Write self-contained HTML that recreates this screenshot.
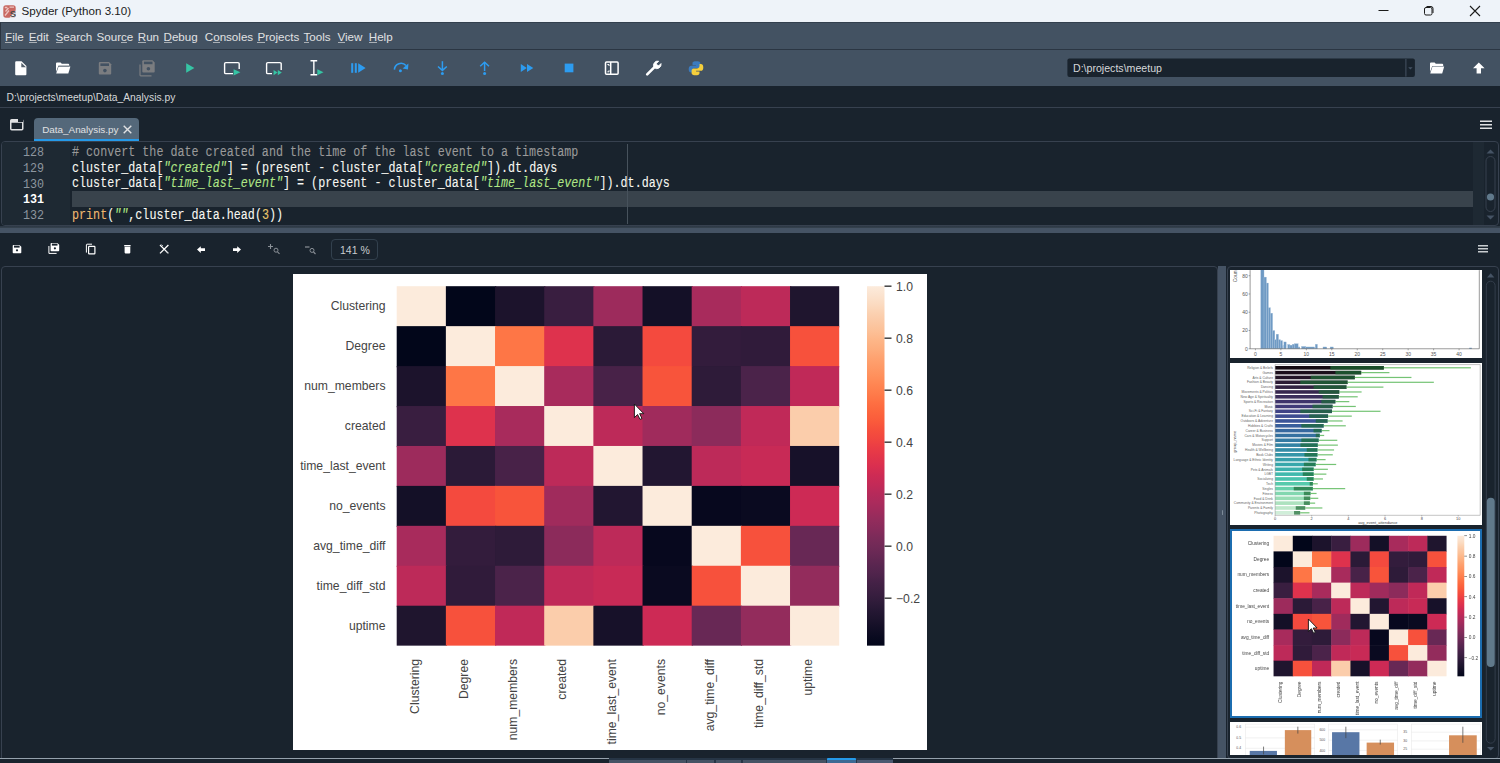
<!DOCTYPE html>
<html><head><meta charset="utf-8">
<style>
*{margin:0;padding:0;box-sizing:border-box}
html,body{width:1500px;height:763px;overflow:hidden;background:#19232d;font-family:"Liberation Sans",sans-serif;-webkit-font-smoothing:antialiased}
.a{position:absolute}
#title{left:0;top:0;width:1500px;height:22px;background:#eef3f9}
#title .t{left:21.5px;top:4px;font-size:11.6px;color:#1b1b1b;white-space:nowrap}
#menu{left:0;top:22px;width:1500px;height:28px;background:#435262;border-left:1px solid #2a3440;border-bottom:1px solid #2b3643;border-top:1px solid #33404e}
.mi{position:absolute;top:7px;font-size:11.6px;color:#e0e1e3;white-space:nowrap}
.mi u{text-decoration:none;box-shadow:inset 0 -1px 0 #aab0b6;padding-bottom:0}
#tool{left:0;top:50px;width:1500px;height:36px;background:#435262}
#pathbar{left:0;top:86px;width:1500px;height:21px;background:#19232d}
.ptxt{left:6.5px;top:5.5px;font-size:10.3px;color:#d5d8da;white-space:nowrap}
#hline1{left:0;top:107px;width:1500px;height:1px;background:#37414f}
#tab{left:34px;top:118px;width:105px;height:24px;background:#54687a;border-radius:4px 4px 0 0}
#tab .tx{left:8.2px;top:5.5px;font-size:9.9px;color:#e0e1e3;white-space:nowrap}
#tab .ul{left:0;top:21px;width:105px;height:3px;background:#259ae9}
#editor{left:1px;top:141px;width:1498px;height:85px;border:1px solid #37414f;border-radius:4px;background:#19232d;overflow:hidden}
#gutter{left:0;top:0;width:68px;height:84px;background:#1e2933}
.ln{position:absolute;left:19px;font-family:"Liberation Mono",monospace;font-size:11.7px;color:#8d969f;width:23px;text-align:right;line-height:15.7px;transform:scaleY(1.17);transform-origin:0 11px;margin-top:2.2px}
.code{position:absolute;left:70px;font-family:"Liberation Mono",monospace;font-size:11.72px;color:#f8f8f2;white-space:pre;line-height:15.7px;transform:scaleY(1.17);transform-origin:0 11px;margin-top:2px;-webkit-text-stroke:0.08px currentColor}
.cm{color:#9a9a9a}.st{color:#b0e686;font-style:italic}.bi{color:#efb870}.nu{color:#e8c56b}
#curline{left:70px;top:49px;width:1402px;height:16px;background:#39434c}
#edgeline{left:625px;top:2px;width:1px;height:80px;background:#47525c}
#splitter1{left:0;top:225.5px;width:1500px;height:7.5px;background:linear-gradient(#2a3644 0,#37434f 2px,#455364 2.5px,#455364 100%)}
#ptool{left:0;top:233px;width:1500px;height:33px;background:#19232d}
#zoombox{left:331px;top:239px;width:47px;height:21px;border:1px solid #32404d;border-radius:4px}
#zoombox span{position:absolute;left:8px;top:4px;font-size:10.5px;color:#c9cdd0;white-space:nowrap}
#plotframe{left:1px;top:266px;width:1217px;height:500px;border:1px solid #37414f;border-radius:4px}
#vsplit{left:1218px;top:266px;width:8px;height:497px;background:#455364}
#thumbframe{left:1227px;top:266px;width:272px;height:493px;border:1px solid #37414f;border-radius:4px}
#fig{left:293px;top:274.1px;width:633.5px;height:475.6px;background:#fff}
.yl{position:absolute;left:-27.5px;font-size:12.2px;color:#444;white-space:nowrap;text-align:right;width:120px;line-height:16px}
.xl{position:absolute;top:385px;font-size:12.2px;color:#444;white-space:nowrap;line-height:16px;transform-origin:0 0;transform:rotate(-90deg) translate(-100%,-50%)}
.tl{position:absolute;left:603px;font-size:12.2px;color:#444;line-height:16px;white-space:nowrap}
#bottombar{left:0;top:758px;width:1500px;height:5px;background:#19232d}
</style></head><body>
<div id="title" class="a">
 <svg class="a" style="left:3px;top:4.5px" width="13" height="13" viewBox="0 0 13 13"><rect x="0.3" y="0.3" width="12.4" height="12.4" rx="2.6" fill="#c86862"/><path d="M1.8 2.5h2.5M6.5 2.2h4.5M2.5 6.5l3-3.5M2 10.5l4-5" stroke="#ecc4c0" stroke-width="1.3"/><path d="M6.4 12.7L12.7 5.2V10.1a2.6 2.6 0 0 1-2.6 2.6Z" fill="#eef3f9"/><text x="9.9" y="12.4" font-size="9.5" font-family="Liberation Sans" fill="#4a4a4a" text-anchor="middle" font-weight="bold">S</text></svg>
 <div class="a t">Spyder (Python 3.10)</div>
 <svg class="a" style="left:1378px;top:5px" width="12" height="12"><rect x="0.5" y="5" width="10" height="1" fill="#1b1b1b"/></svg>
 <svg class="a" style="left:1423px;top:5px" width="12" height="12"><rect x="1.5" y="2.5" width="7.5" height="7.5" rx="1.5" fill="none" stroke="#1b1b1b" stroke-width="1"/><path d="M3.5 1.5h4.5a2 2 0 0 1 2 2v4.5" fill="none" stroke="#1b1b1b" stroke-width="1"/></svg>
 <svg class="a" style="left:1469px;top:5px" width="12" height="12"><path d="M1 1L11 11M11 1L1 11" stroke="#1b1b1b" stroke-width="1.1"/></svg>
</div>
<div id="menu" class="a">
 <div class="mi" style="left:4.1px"><u>F</u>ile</div>
 <div class="mi" style="left:27.8px"><u>E</u>dit</div>
 <div class="mi" style="left:54.5px"><u>S</u>earch</div>
 <div class="mi" style="left:95.5px">Sour<u>c</u>e</div>
 <div class="mi" style="left:136.8px"><u>R</u>un</div>
 <div class="mi" style="left:162.5px"><u>D</u>ebug</div>
 <div class="mi" style="left:203.8px">C<u>o</u>nsoles</div>
 <div class="mi" style="left:256.4px"><u>P</u>rojects</div>
 <div class="mi" style="left:302.5px"><u>T</u>ools</div>
 <div class="mi" style="left:336.5px"><u>V</u>iew</div>
 <div class="mi" style="left:367.8px"><u>H</u>elp</div>
</div>
<div id="tool" class="a">
<svg class="a" style="left:0;top:0" width="1500" height="36" viewBox="0 50 1500 36">
<!-- new file -->
<path d="M15.2 62.2a1 1 0 0 1 1-1H21.5L26.4 66.1V74.2a1 1 0 0 1-1 1H16.2a1 1 0 0 1-1-1Z" fill="#ffffff"/>
<path d="M21.3 62.8L26 67.2H21.3Z" fill="#55606b"/>
<!-- open folder -->
<path d="M56 63.4a1 1 0 0 1 1-1h3.6l1.2 1.3h6.4a1 1 0 0 1 1 1V66H58.3L56 72Z" fill="#ffffff"/>
<path d="M58.6 66.6H70.4L68.3 73.6H56.2Z" fill="#ffffff"/>
<path d="M58.3 66H69.2" stroke="#55606b" stroke-width="0.8"/>
<!-- save disabled -->
<path d="M98.8 63a1 1 0 0 1 1-1h9.2l2.2 2.2v9.2a1 1 0 0 1-1 1H99.8a1 1 0 0 1-1-1Z" fill="#7b7d80"/>
<rect x="100.4" y="63.4" width="8.6" height="2.6" fill="#435262"/>
<circle cx="104.9" cy="70.6" r="1.8" fill="#435262"/>
<!-- save all disabled -->
<path d="M142.3 61.2a1 1 0 0 1 1-1h9.2l2.2 2.2v9.2a1 1 0 0 1-1 1H143.3a1 1 0 0 1-1-1Z" fill="#7b7d80"/>
<rect x="143.9" y="61.6" width="8.6" height="2.6" fill="#435262"/>
<circle cx="148.4" cy="68.8" r="1.8" fill="#435262"/>
<path d="M140 64.5V75a0.8 0.8 0 0 0 0.8 0.8H151.5" fill="none" stroke="#7b7d80" stroke-width="1.2"/>
<!-- run -->
<path d="M186.2 63.3L194.4 68L186.2 72.7Z" fill="#36c4a4"/>
<!-- run cell -->
<path d="M233 73.6H225.8a1.2 1.2 0 0 1-1.2-1.2V63.8a1.2 1.2 0 0 1 1.2-1.2H238a1.2 1.2 0 0 1 1.2 1.2V69" fill="none" stroke="#ffffff" stroke-width="1.4"/>
<path d="M233.6 69.3L240.4 72.3L233.6 75.5Z" fill="#36c4a4"/>
<!-- run cell advance -->
<path d="M272 73.6H267.8a1.2 1.2 0 0 1-1.2-1.2V63.8a1.2 1.2 0 0 1 1.2-1.2H280a1.2 1.2 0 0 1 1.2 1.2V70" fill="none" stroke="#ffffff" stroke-width="1.4"/>
<path d="M273.6 70L277.6 72.6L273.6 75.2Z M277.8 70L281.8 72.6L277.8 75.2Z" fill="#36c4a4"/>
<!-- run selection -->
<path d="M310.5 60.7H317.2M310.5 74.8H317.2M313.85 60.7V74.8" stroke="#ffffff" stroke-width="1.4"/>
<path d="M317.3 69.2L323.5 72.2L317.3 75.3Z" fill="#36c4a4"/>
<!-- debug -->
<rect x="351.2" y="63.2" width="2" height="9.6" fill="#2d9cf0"/>
<rect x="354.8" y="63.2" width="2" height="9.6" fill="#2d9cf0"/>
<path d="M358.2 63.2L365.6 68L358.2 72.8Z" fill="#2d9cf0"/>
<!-- step over -->
<path d="M394.4 69.6A6.6 6.6 0 0 1 406 65.6" fill="none" stroke="#2d9cf0" stroke-width="1.6"/>
<path d="M408.4 63.5L408 69.5L402.6 68.6Z" fill="#2d9cf0"/>
<circle cx="400.4" cy="70.8" r="1.5" fill="#2d9cf0"/>
<!-- step into -->
<path d="M442.4 61.2V70" stroke="#2d9cf0" stroke-width="1.5"/>
<path d="M438 66.5L442.4 70.4L446.8 66.5" fill="none" stroke="#2d9cf0" stroke-width="1.5"/>
<circle cx="442.4" cy="73.6" r="1.5" fill="#2d9cf0"/>
<!-- step return -->
<path d="M484.6 62V71" stroke="#2d9cf0" stroke-width="1.5"/>
<path d="M480.2 66.2L484.6 62.2L489 66.2" fill="none" stroke="#2d9cf0" stroke-width="1.5"/>
<circle cx="484.6" cy="73.6" r="1.5" fill="#2d9cf0"/>
<!-- continue -->
<path d="M520.8 64L526.8 68L520.8 72Z M527 64L533.3 68L527 72Z" fill="#2d9cf0"/>
<!-- stop -->
<rect x="564.7" y="63.6" width="8.7" height="8.7" fill="#2d9cf0"/>
<!-- maximize pane -->
<rect x="605.5" y="62" width="12.6" height="12.2" rx="1" fill="none" stroke="#ffffff" stroke-width="1.5"/>
<path d="M610.7 62V74.2" stroke="#ffffff" stroke-width="1.5"/>
<path d="M607.4 64.5H609V66M607.4 71.8H609V70.3" fill="none" stroke="#ffffff" stroke-width="1"/>
<!-- wrench -->
<path d="M647.2 74.4L655 66.6" stroke="#ffffff" stroke-width="2.6" stroke-linecap="round"/>
<path d="M654.2 67.6A4.2 4.2 0 0 1 658.6 61.2L656.4 63.4L657 65.2L658.8 65.8L661 63.6A4.2 4.2 0 0 1 654.2 67.6Z" fill="#ffffff" stroke="#ffffff" stroke-width="1"/>
<!-- python -->
<path d="M695.8 61.3c-3 0-3.3 1.3-3.3 2.2v1.7h3.4v0.6h-4.8c-1.5 0-2.4 1.2-2.4 3.4s1 3.3 2.4 3.3h1.4v-2c0-1.4 1.2-2.4 2.5-2.4h3.3c1.2 0 2.1-1 2.1-2.2v-2.4c0-1.3-1.2-2.2-2.6-2.2Z" fill="#3b7bbf"/>
<path d="M696.2 75.3c3 0 3.3-1.3 3.3-2.2v-1.7h-3.4v-0.6h4.8c1.5 0 2.4-1.2 2.4-3.4s-1-3.3-2.4-3.3h-1.4v2c0 1.4-1.2 2.4-2.5 2.4h-3.3c-1.2 0-2.1 1-2.1 2.2v2.4c0 1.3 1.2 2.2 2.6 2.2Z" fill="#f5cf3c"/>
<!-- combo -->
<rect x="1067.4" y="58.6" width="347.5" height="18.4" rx="2" fill="#19232d"/>
<path d="M1405.9 59V76.6" stroke="#455364" stroke-width="1"/>
<path d="M1408.2 67.3L1410.4 69.5L1412.6 67.3Z" fill="#455364"/>
<!-- folder right -->
<path d="M1430 63.5a1 1 0 0 1 1-1h3.6l1.2 1.2h6.4a1 1 0 0 1 1 1V66H1432.3L1430 72Z" fill="#ffffff"/>
<path d="M1432.5 66.6H1444.2L1442.2 73.6H1430.2Z" fill="#ffffff"/>
<!-- up arrow -->
<path d="M1478.8 62.5L1484.6 68.3H1481V73.6H1476.6V68.3H1473Z" fill="#ffffff"/>
</svg>
<div class="a" style="left:1073px;top:12px;font-size:10.6px;color:#d5d8da;white-space:nowrap">D:\projects\meetup</div>
</div>
<div id="pathbar" class="a"><div class="a ptxt">D:\projects\meetup\Data_Analysis.py</div></div>
<div id="hline1" class="a"></div>
<svg class="a" style="left:10px;top:119px" width="14" height="12"><rect x="0.75" y="0.75" width="12" height="10" rx="1" fill="none" stroke="#e0e1e3" stroke-width="1.5"/><rect x="0.75" y="0.75" width="12" height="3" fill="#e0e1e3"/><rect x="8" y="0" width="5" height="3" fill="#19232d"/></svg>
<div id="tab" class="a"><div class="a tx">Data_Analysis.py</div>
 <svg class="a" style="left:89px;top:7px" width="9" height="9"><path d="M0.7 0.7L8.3 8.3M8.3 0.7L0.7 8.3" stroke="#e0e1e3" stroke-width="1.4"/></svg>
 <div class="a ul"></div></div>
<svg class="a" style="left:1480px;top:120px" width="12" height="10"><rect x="0" y="0.5" width="12" height="1.5" fill="#e0e1e3"/><rect x="0" y="4" width="12" height="1.5" fill="#e0e1e3"/><rect x="0" y="7.5" width="12" height="1.5" fill="#e0e1e3"/></svg>
<div id="editor" class="a">
 <div id="gutter" class="a"></div>
 <div id="curline" class="a"></div>
 <div id="edgeline" class="a"></div>
 <div class="ln" style="top:2px">128</div>
 <div class="ln" style="top:17.7px">129</div>
 <div class="ln" style="top:33.4px">130</div>
 <div class="ln" style="top:49.1px;color:#fff;font-weight:bold">131</div>
 <div class="ln" style="top:64.8px">132</div>
 <div class="code" style="top:2px"><span class="cm"># convert the date created and the time of the last event to a timestamp</span></div>
 <div class="code" style="top:17.7px">cluster_data[<span class="st">"created"</span>] = (present - cluster_data[<span class="st">"created"</span>]).dt.days</div>
 <div class="code" style="top:33.4px">cluster_data[<span class="st">"time_last_event"</span>] = (present - cluster_data[<span class="st">"time_last_event"</span>]).dt.days</div>
 <div class="code" style="top:64.8px"><span class="bi">print</span>(<span class="st">""</span>,cluster_data.head(<span class="nu">3</span>))</div>
 <div class="a" style="left:1471px;top:0;width:11px;height:84px;background:#1e2933"></div>
</div>
<svg class="a" style="left:1484px;top:147px" width="13" height="75">
 <path d="M2.5 6.5L6.5 2.5L10.5 6.5Z" fill="#455364"/>
 <rect x="2" y="9.5" width="9" height="55" rx="4.5" fill="none" stroke="#37414f" stroke-width="1"/>
 <circle cx="6.5" cy="50" r="3.6" fill="#60798b"/>
 <path d="M2.5 68.5L6.5 72.5L10.5 68.5Z" fill="#455364"/>
</svg>
<div id="splitter1" class="a"></div>
<div id="ptool" class="a">
<svg class="a" style="left:0;top:0" width="1500" height="33" viewBox="0 233 1500 33">
<!-- save -->
<path d="M12.7 245.8a0.8 0.8 0 0 1 0.8-0.8h6l1.8 1.8v5.7a0.8 0.8 0 0 1-0.8 0.8H13.5a0.8 0.8 0 0 1-0.8-0.8Z" fill="#ffffff"/>
<rect x="14" y="245.6" width="5.6" height="2" fill="#19232d"/>
<circle cx="17" cy="250.3" r="1.1" fill="#19232d"/>
<!-- save all -->
<path d="M50.6 243.8a0.8 0.8 0 0 1 0.8-0.8h6l1.8 1.8v5.7a0.8 0.8 0 0 1-0.8 0.8H51.4a0.8 0.8 0 0 1-0.8-0.8Z" fill="#ffffff"/>
<rect x="51.9" y="243.6" width="5.6" height="2" fill="#19232d"/>
<circle cx="54.9" cy="248.3" r="1.1" fill="#19232d"/>
<path d="M48.9 246V253.4H56.6" fill="none" stroke="#ffffff" stroke-width="1"/>
<!-- copy -->
<path d="M86.4 252.6V244.8a0.6 0.6 0 0 1 0.6-0.6H92" fill="none" stroke="#ffffff" stroke-width="1"/>
<rect x="88.6" y="246.3" width="6.3" height="7.6" rx="0.6" fill="none" stroke="#ffffff" stroke-width="1.2"/>
<!-- delete -->
<rect x="124.2" y="245" width="6.4" height="1.3" fill="#ffffff"/>
<path d="M124.6 246.8H130.3V252.6a0.8 0.8 0 0 1-0.8 0.8H125.4a0.8 0.8 0 0 1-0.8-0.8Z" fill="#ffffff"/>
<!-- close all -->
<path d="M160 245L168.4 253.4M168.4 245L160 253.4" stroke="#ffffff" stroke-width="1.3"/>
<path d="M161.5 244.5L163 246M166 251.5L167.5 253" stroke="#b0b6bb" stroke-width="1"/>
<!-- back -->
<path d="M197 249.6L200.8 246.2V248.3H205V251H200.8V253Z" fill="#ffffff"/>
<!-- forward -->
<path d="M241 249.6L237.2 246.2V248.3H233V251H237.2V253Z" fill="#ffffff"/>
<!-- zoom in disabled -->
<path d="M270.5 244V249M268 246.5H273" stroke="#8a9097" stroke-width="1.1"/>
<circle cx="276" cy="250.2" r="2" fill="none" stroke="#8a9097" stroke-width="1"/>
<path d="M277.5 251.8L279.5 253.8" stroke="#8a9097" stroke-width="1.1"/>
<!-- zoom out disabled -->
<path d="M305 247H309.5" stroke="#8a9097" stroke-width="1.2"/>
<circle cx="312" cy="250.4" r="2" fill="none" stroke="#8a9097" stroke-width="1"/>
<path d="M313.5 252L315.5 254" stroke="#8a9097" stroke-width="1.1"/>
</svg>
</div>
<div id="zoombox" class="a"><span>141 %</span></div>
<svg class="a" style="left:1478px;top:245px" width="10" height="8"><rect x="0" y="0" width="10" height="1.5" fill="#c9cdd0"/><rect x="0" y="3" width="10" height="1.5" fill="#c9cdd0"/><rect x="0" y="6" width="10" height="1.5" fill="#c9cdd0"/></svg>
<div id="plotframe" class="a"></div>
<div id="vsplit" class="a"></div>
<div id="thumbframe" class="a"></div>
<div id="fig" class="a fig"><svg class="a" style="left:0;top:0" width="634" height="476"><defs><linearGradient id="cbgm" x1="0" y1="1" x2="0" y2="0">
<stop offset="0.000" stop-color="#02061a"/>
<stop offset="0.025" stop-color="#0a0a20"/>
<stop offset="0.050" stop-color="#130f26"/>
<stop offset="0.075" stop-color="#1d142d"/>
<stop offset="0.100" stop-color="#261834"/>
<stop offset="0.125" stop-color="#311c3b"/>
<stop offset="0.150" stop-color="#3b1f41"/>
<stop offset="0.175" stop-color="#442146"/>
<stop offset="0.200" stop-color="#50244c"/>
<stop offset="0.225" stop-color="#5a2650"/>
<stop offset="0.250" stop-color="#662854"/>
<stop offset="0.275" stop-color="#712a57"/>
<stop offset="0.300" stop-color="#7b2b59"/>
<stop offset="0.325" stop-color="#882b5b"/>
<stop offset="0.350" stop-color="#932c5c"/>
<stop offset="0.375" stop-color="#a02b5c"/>
<stop offset="0.400" stop-color="#ac2b5c"/>
<stop offset="0.425" stop-color="#b72a5a"/>
<stop offset="0.450" stop-color="#c42a57"/>
<stop offset="0.475" stop-color="#ce2b54"/>
<stop offset="0.500" stop-color="#da2f4f"/>
<stop offset="0.525" stop-color="#e2354a"/>
<stop offset="0.550" stop-color="#ea3c45"/>
<stop offset="0.575" stop-color="#f14640"/>
<stop offset="0.600" stop-color="#f64f3c"/>
<stop offset="0.625" stop-color="#fa5b3b"/>
<stop offset="0.650" stop-color="#fc653d"/>
<stop offset="0.675" stop-color="#fe6f42"/>
<stop offset="0.700" stop-color="#fe7b4a"/>
<stop offset="0.725" stop-color="#ff8552"/>
<stop offset="0.750" stop-color="#ff905c"/>
<stop offset="0.775" stop-color="#fe9966"/>
<stop offset="0.800" stop-color="#fea270"/>
<stop offset="0.825" stop-color="#fdad7d"/>
<stop offset="0.850" stop-color="#fdb688"/>
<stop offset="0.875" stop-color="#fcc097"/>
<stop offset="0.900" stop-color="#fbc8a4"/>
<stop offset="0.925" stop-color="#fbd1b1"/>
<stop offset="0.950" stop-color="#fbdbc1"/>
<stop offset="0.975" stop-color="#fbe3cf"/>
<stop offset="1.000" stop-color="#fcebdc"/>
</linearGradient></defs>
<rect x="103.70" y="12.20" width="50.37" height="41.14" fill="#fcebdc"/>
<rect x="152.87" y="12.20" width="50.37" height="41.14" fill="#02061a"/>
<rect x="202.03" y="12.20" width="50.37" height="41.14" fill="#1c132c"/>
<rect x="251.20" y="12.20" width="50.37" height="41.14" fill="#391e40"/>
<rect x="300.37" y="12.20" width="50.37" height="41.14" fill="#9d2b5c"/>
<rect x="349.53" y="12.20" width="50.37" height="41.14" fill="#141027"/>
<rect x="398.70" y="12.20" width="50.37" height="41.14" fill="#a82b5c"/>
<rect x="447.87" y="12.20" width="50.37" height="41.14" fill="#bd2a59"/>
<rect x="497.03" y="12.20" width="49.17" height="41.14" fill="#1f152e"/>
<rect x="103.70" y="52.14" width="50.37" height="41.14" fill="#02061a"/>
<rect x="152.87" y="52.14" width="50.37" height="41.14" fill="#fcebdc"/>
<rect x="202.03" y="52.14" width="50.37" height="41.14" fill="#fe7646"/>
<rect x="251.20" y="52.14" width="50.37" height="41.14" fill="#de324d"/>
<rect x="300.37" y="52.14" width="50.37" height="41.14" fill="#2b1a37"/>
<rect x="349.53" y="52.14" width="50.37" height="41.14" fill="#f44a3e"/>
<rect x="398.70" y="52.14" width="50.37" height="41.14" fill="#331c3c"/>
<rect x="447.87" y="52.14" width="50.37" height="41.14" fill="#301b3a"/>
<rect x="497.03" y="52.14" width="49.17" height="41.14" fill="#f7513c"/>
<rect x="103.70" y="92.08" width="50.37" height="41.14" fill="#1c132c"/>
<rect x="152.87" y="92.08" width="50.37" height="41.14" fill="#fe7646"/>
<rect x="202.03" y="92.08" width="50.37" height="41.14" fill="#fcebdc"/>
<rect x="251.20" y="92.08" width="50.37" height="41.14" fill="#a82b5c"/>
<rect x="300.37" y="92.08" width="50.37" height="41.14" fill="#482248"/>
<rect x="349.53" y="92.08" width="50.37" height="41.14" fill="#f8543b"/>
<rect x="398.70" y="92.08" width="50.37" height="41.14" fill="#2e1b39"/>
<rect x="447.87" y="92.08" width="50.37" height="41.14" fill="#4b234a"/>
<rect x="497.03" y="92.08" width="49.17" height="41.14" fill="#c02958"/>
<rect x="103.70" y="132.02" width="50.37" height="41.14" fill="#391e40"/>
<rect x="152.87" y="132.02" width="50.37" height="41.14" fill="#de324d"/>
<rect x="202.03" y="132.02" width="50.37" height="41.14" fill="#a82b5c"/>
<rect x="251.20" y="132.02" width="50.37" height="41.14" fill="#fcebdc"/>
<rect x="300.37" y="132.02" width="50.37" height="41.14" fill="#bd2a59"/>
<rect x="349.53" y="132.02" width="50.37" height="41.14" fill="#a02b5c"/>
<rect x="398.70" y="132.02" width="50.37" height="41.14" fill="#8c2b5b"/>
<rect x="447.87" y="132.02" width="50.37" height="41.14" fill="#c02958"/>
<rect x="497.03" y="132.02" width="49.17" height="41.14" fill="#fbcdab"/>
<rect x="103.70" y="171.96" width="50.37" height="41.14" fill="#9d2b5c"/>
<rect x="152.87" y="171.96" width="50.37" height="41.14" fill="#2b1a37"/>
<rect x="202.03" y="171.96" width="50.37" height="41.14" fill="#482248"/>
<rect x="251.20" y="171.96" width="50.37" height="41.14" fill="#bd2a59"/>
<rect x="300.37" y="171.96" width="50.37" height="41.14" fill="#fcebdc"/>
<rect x="349.53" y="171.96" width="50.37" height="41.14" fill="#221631"/>
<rect x="398.70" y="171.96" width="50.37" height="41.14" fill="#bd2a59"/>
<rect x="447.87" y="171.96" width="50.37" height="41.14" fill="#c82a56"/>
<rect x="497.03" y="171.96" width="49.17" height="41.14" fill="#171129"/>
<rect x="103.70" y="211.89" width="50.37" height="41.14" fill="#141027"/>
<rect x="152.87" y="211.89" width="50.37" height="41.14" fill="#f44a3e"/>
<rect x="202.03" y="211.89" width="50.37" height="41.14" fill="#f8543b"/>
<rect x="251.20" y="211.89" width="50.37" height="41.14" fill="#a02b5c"/>
<rect x="300.37" y="211.89" width="50.37" height="41.14" fill="#221631"/>
<rect x="349.53" y="211.89" width="50.37" height="41.14" fill="#fcebdc"/>
<rect x="398.70" y="211.89" width="50.37" height="41.14" fill="#07081e"/>
<rect x="447.87" y="211.89" width="50.37" height="41.14" fill="#0a0a20"/>
<rect x="497.03" y="211.89" width="49.17" height="41.14" fill="#cd2a55"/>
<rect x="103.70" y="251.83" width="50.37" height="41.14" fill="#a82b5c"/>
<rect x="152.87" y="251.83" width="50.37" height="41.14" fill="#331c3c"/>
<rect x="202.03" y="251.83" width="50.37" height="41.14" fill="#2e1b39"/>
<rect x="251.20" y="251.83" width="50.37" height="41.14" fill="#8c2b5b"/>
<rect x="300.37" y="251.83" width="50.37" height="41.14" fill="#bd2a59"/>
<rect x="349.53" y="251.83" width="50.37" height="41.14" fill="#07081e"/>
<rect x="398.70" y="251.83" width="50.37" height="41.14" fill="#fcebdc"/>
<rect x="447.87" y="251.83" width="50.37" height="41.14" fill="#f7513c"/>
<rect x="497.03" y="251.83" width="49.17" height="41.14" fill="#682855"/>
<rect x="103.70" y="291.77" width="50.37" height="41.14" fill="#bd2a59"/>
<rect x="152.87" y="291.77" width="50.37" height="41.14" fill="#301b3a"/>
<rect x="202.03" y="291.77" width="50.37" height="41.14" fill="#4b234a"/>
<rect x="251.20" y="291.77" width="50.37" height="41.14" fill="#c02958"/>
<rect x="300.37" y="291.77" width="50.37" height="41.14" fill="#c82a56"/>
<rect x="349.53" y="291.77" width="50.37" height="41.14" fill="#0a0a20"/>
<rect x="398.70" y="291.77" width="50.37" height="41.14" fill="#f7513c"/>
<rect x="447.87" y="291.77" width="50.37" height="41.14" fill="#fcebdc"/>
<rect x="497.03" y="291.77" width="49.17" height="41.14" fill="#932c5c"/>
<rect x="103.70" y="331.71" width="50.37" height="39.94" fill="#1f152e"/>
<rect x="152.87" y="331.71" width="50.37" height="39.94" fill="#f7513c"/>
<rect x="202.03" y="331.71" width="50.37" height="39.94" fill="#c02958"/>
<rect x="251.20" y="331.71" width="50.37" height="39.94" fill="#fbcdab"/>
<rect x="300.37" y="331.71" width="50.37" height="39.94" fill="#171129"/>
<rect x="349.53" y="331.71" width="50.37" height="39.94" fill="#cd2a55"/>
<rect x="398.70" y="331.71" width="50.37" height="39.94" fill="#682855"/>
<rect x="447.87" y="331.71" width="50.37" height="39.94" fill="#932c5c"/>
<rect x="497.03" y="331.71" width="49.17" height="39.94" fill="#fcebdc"/>
<rect x="574.00" y="12.20" width="17.5" height="359.45" fill="url(#cbgm)"/>
<rect x="591.50" y="11.45" width="7" height="1.5" fill="#444"/>
<rect x="591.50" y="63.45" width="7" height="1.5" fill="#444"/>
<rect x="591.50" y="115.45" width="7" height="1.5" fill="#444"/>
<rect x="591.50" y="167.45" width="7" height="1.5" fill="#444"/>
<rect x="591.50" y="219.45" width="7" height="1.5" fill="#444"/>
<rect x="591.50" y="271.45" width="7" height="1.5" fill="#444"/>
<rect x="591.50" y="323.45" width="7" height="1.5" fill="#444"/>
</svg>
<div class="yl" style="top:24.2px">Clustering</div>
<div class="yl" style="top:64.1px">Degree</div>
<div class="yl" style="top:104.0px">num_members</div>
<div class="yl" style="top:144.0px">created</div>
<div class="yl" style="top:183.9px">time_last_event</div>
<div class="yl" style="top:223.9px">no_events</div>
<div class="yl" style="top:263.8px">avg_time_diff</div>
<div class="yl" style="top:303.7px">time_diff_std</div>
<div class="yl" style="top:343.7px">uptime</div>
<div class="xl" style="left:121.8px">Clustering</div>
<div class="xl" style="left:170.9px">Degree</div>
<div class="xl" style="left:220.1px">num_members</div>
<div class="xl" style="left:269.3px">created</div>
<div class="xl" style="left:318.5px">time_last_event</div>
<div class="xl" style="left:367.6px">no_events</div>
<div class="xl" style="left:416.8px">avg_time_diff</div>
<div class="xl" style="left:466.0px">time_diff_std</div>
<div class="xl" style="left:515.1px">uptime</div>
<div class="tl" style="top:5.2px">1.0</div>
<div class="tl" style="top:57.2px">0.8</div>
<div class="tl" style="top:109.2px">0.6</div>
<div class="tl" style="top:161.2px">0.4</div>
<div class="tl" style="top:213.2px">0.2</div>
<div class="tl" style="top:265.2px">0.0</div>
<div class="tl" style="top:317.2px">−0.2</div></div>
<div class="a" style="left:1230.3px;top:269.8px;width:251.8px;height:88.7px;background:#fff;overflow:hidden">
<svg class="a" style="left:0;top:0" width="252" height="89" viewBox="1230.3 269.8 251.8 88.7">
<rect x="1261.00" y="260.80" width="3.30" height="87.60" fill="#6f9ac4" stroke="#a9c3dc" stroke-width="0.3"/>
<rect x="1264.30" y="276.77" width="2.40" height="71.63" fill="#6f9ac4" stroke="#a9c3dc" stroke-width="0.3"/>
<rect x="1266.70" y="282.70" width="2.00" height="65.70" fill="#6f9ac4" stroke="#a9c3dc" stroke-width="0.3"/>
<rect x="1268.70" y="307.34" width="2.00" height="41.06" fill="#6f9ac4" stroke="#a9c3dc" stroke-width="0.3"/>
<rect x="1270.70" y="312.81" width="2.20" height="35.59" fill="#6f9ac4" stroke="#a9c3dc" stroke-width="0.3"/>
<rect x="1272.90" y="330.15" width="2.20" height="18.25" fill="#6f9ac4" stroke="#a9c3dc" stroke-width="0.3"/>
<rect x="1275.10" y="339.27" width="1.30" height="9.12" fill="#6f9ac4" stroke="#a9c3dc" stroke-width="0.3"/>
<rect x="1276.40" y="333.80" width="2.40" height="14.60" fill="#6f9ac4" stroke="#a9c3dc" stroke-width="0.3"/>
<rect x="1278.80" y="339.27" width="1.80" height="9.12" fill="#6f9ac4" stroke="#a9c3dc" stroke-width="0.3"/>
<rect x="1280.60" y="340.19" width="2.20" height="8.21" fill="#6f9ac4" stroke="#a9c3dc" stroke-width="0.3"/>
<rect x="1282.80" y="344.75" width="0.80" height="3.65" fill="#6f9ac4" stroke="#a9c3dc" stroke-width="0.3"/>
<rect x="1284.10" y="341.56" width="2.40" height="6.84" fill="#6f9ac4" stroke="#a9c3dc" stroke-width="0.3"/>
<rect x="1287.90" y="344.11" width="2.30" height="4.29" fill="#6f9ac4" stroke="#a9c3dc" stroke-width="0.3"/>
<rect x="1290.20" y="344.75" width="2.20" height="3.65" fill="#6f9ac4" stroke="#a9c3dc" stroke-width="0.3"/>
<rect x="1292.40" y="343.84" width="2.20" height="4.56" fill="#6f9ac4" stroke="#a9c3dc" stroke-width="0.3"/>
<rect x="1294.60" y="343.29" width="3.80" height="5.11" fill="#6f9ac4" stroke="#a9c3dc" stroke-width="0.3"/>
<rect x="1298.40" y="346.57" width="1.70" height="1.82" fill="#6f9ac4" stroke="#a9c3dc" stroke-width="0.3"/>
<rect x="1301.70" y="346.03" width="4.40" height="2.37" fill="#6f9ac4" stroke="#a9c3dc" stroke-width="0.3"/>
<rect x="1306.10" y="346.57" width="8.80" height="1.82" fill="#6f9ac4" stroke="#a9c3dc" stroke-width="0.3"/>
<rect x="1315.50" y="343.84" width="2.20" height="4.56" fill="#6f9ac4" stroke="#a9c3dc" stroke-width="0.3"/>
<rect x="1323.20" y="346.57" width="3.80" height="1.82" fill="#6f9ac4" stroke="#a9c3dc" stroke-width="0.3"/>
<rect x="1330.30" y="346.57" width="3.30" height="1.82" fill="#6f9ac4" stroke="#a9c3dc" stroke-width="0.3"/>
<rect x="1469.38" y="347.40" width="2.54" height="1" fill="#6f9ac4"/>
<path d="M1250.4 269.8V348.4H1479.4V269.8" fill="none" stroke="#555" stroke-width="0.6"/>
<path d="M1255.70 348.4v1.5" stroke="#555" stroke-width="0.5"/>
<text x="1255.70" y="355.2" font-size="5" fill="#555" text-anchor="middle" font-family="Liberation Sans">0</text>
<path d="M1281.14 348.4v1.5" stroke="#555" stroke-width="0.5"/>
<text x="1281.14" y="355.2" font-size="5" fill="#555" text-anchor="middle" font-family="Liberation Sans">5</text>
<path d="M1306.58 348.4v1.5" stroke="#555" stroke-width="0.5"/>
<text x="1306.58" y="355.2" font-size="5" fill="#555" text-anchor="middle" font-family="Liberation Sans">10</text>
<path d="M1332.01 348.4v1.5" stroke="#555" stroke-width="0.5"/>
<text x="1332.01" y="355.2" font-size="5" fill="#555" text-anchor="middle" font-family="Liberation Sans">15</text>
<path d="M1357.45 348.4v1.5" stroke="#555" stroke-width="0.5"/>
<text x="1357.45" y="355.2" font-size="5" fill="#555" text-anchor="middle" font-family="Liberation Sans">20</text>
<path d="M1382.89 348.4v1.5" stroke="#555" stroke-width="0.5"/>
<text x="1382.89" y="355.2" font-size="5" fill="#555" text-anchor="middle" font-family="Liberation Sans">25</text>
<path d="M1408.33 348.4v1.5" stroke="#555" stroke-width="0.5"/>
<text x="1408.33" y="355.2" font-size="5" fill="#555" text-anchor="middle" font-family="Liberation Sans">30</text>
<path d="M1433.76 348.4v1.5" stroke="#555" stroke-width="0.5"/>
<text x="1433.76" y="355.2" font-size="5" fill="#555" text-anchor="middle" font-family="Liberation Sans">35</text>
<path d="M1459.20 348.4v1.5" stroke="#555" stroke-width="0.5"/>
<text x="1459.20" y="355.2" font-size="5" fill="#555" text-anchor="middle" font-family="Liberation Sans">40</text>
<path d="M1248.9 348.40h1.5" stroke="#555" stroke-width="0.5"/>
<text x="1248" y="350.20" font-size="5" fill="#555" text-anchor="end" font-family="Liberation Sans">0</text>
<path d="M1248.9 330.15h1.5" stroke="#555" stroke-width="0.5"/>
<text x="1248" y="331.95" font-size="5" fill="#555" text-anchor="end" font-family="Liberation Sans">20</text>
<path d="M1248.9 311.90h1.5" stroke="#555" stroke-width="0.5"/>
<text x="1248" y="313.70" font-size="5" fill="#555" text-anchor="end" font-family="Liberation Sans">40</text>
<path d="M1248.9 293.65h1.5" stroke="#555" stroke-width="0.5"/>
<text x="1248" y="295.45" font-size="5" fill="#555" text-anchor="end" font-family="Liberation Sans">60</text>
<path d="M1248.9 275.40h1.5" stroke="#555" stroke-width="0.5"/>
<text x="1248" y="277.20" font-size="5" fill="#555" text-anchor="end" font-family="Liberation Sans">80</text>
<text x="0" y="0" font-size="5" fill="#555" font-family="Liberation Sans" transform="translate(1237.3 282) rotate(-90)">Count</text>
</svg></div>
<div class="a" style="left:1230.3px;top:362.5px;width:251.8px;height:162.7px;background:#fff;overflow:hidden">
<svg class="a" style="left:0;top:0" width="252" height="163" viewBox="1230.3 362.5 251.8 162.7">
<rect x="1275.4" y="365.40" width="108.60" height="3.6" fill="#130910"/>
<rect x="1330.6" y="365.40" width="53.40" height="3.6" fill="#1d6b35" opacity="0.7"/>
<rect x="1384" y="366.60" width="87.00" height="1.2" fill="#5cb85c" opacity="0.85"/>
<text x="1273.3" y="368.40" font-size="3.3" fill="#666" text-anchor="end" font-family="Liberation Sans">Religion &amp; Beliefs</text>
<rect x="1275.4" y="370.23" width="86.00" height="3.6" fill="#1b0f1b"/>
<rect x="1335.6" y="370.23" width="25.80" height="3.6" fill="#1d6b35" opacity="0.7"/>
<rect x="1361.4" y="371.43" width="28.20" height="1.2" fill="#5cb85c" opacity="0.85"/>
<text x="1273.3" y="373.23" font-size="3.3" fill="#666" text-anchor="end" font-family="Liberation Sans">Games</text>
<rect x="1275.4" y="375.06" width="79.60" height="3.6" fill="#231527"/>
<rect x="1311" y="375.06" width="44.00" height="3.6" fill="#1d6b35" opacity="0.7"/>
<rect x="1355" y="376.26" width="56.60" height="1.2" fill="#5cb85c" opacity="0.85"/>
<text x="1273.3" y="378.06" font-size="3.3" fill="#666" text-anchor="end" font-family="Liberation Sans">Arts &amp; Culture</text>
<rect x="1275.4" y="379.89" width="72.40" height="3.6" fill="#2b1b34"/>
<rect x="1300.5" y="379.89" width="47.30" height="3.6" fill="#1d6b35" opacity="0.7"/>
<rect x="1347.8" y="381.09" width="86.20" height="1.2" fill="#5cb85c" opacity="0.85"/>
<text x="1273.3" y="382.89" font-size="3.3" fill="#666" text-anchor="end" font-family="Liberation Sans">Fashion &amp; Beauty</text>
<rect x="1275.4" y="384.72" width="71.30" height="3.6" fill="#312141"/>
<rect x="1313.8" y="384.72" width="32.90" height="3.6" fill="#1d6b35" opacity="0.7"/>
<rect x="1346.7" y="385.92" width="36.90" height="1.2" fill="#5cb85c" opacity="0.85"/>
<text x="1273.3" y="387.72" font-size="3.3" fill="#666" text-anchor="end" font-family="Liberation Sans">Dancing</text>
<rect x="1275.4" y="389.55" width="64.10" height="3.6" fill="#36274f"/>
<rect x="1318.9" y="389.55" width="20.60" height="3.6" fill="#1d6b35" opacity="0.7"/>
<rect x="1339.5" y="390.75" width="22.30" height="1.2" fill="#5cb85c" opacity="0.85"/>
<text x="1273.3" y="392.55" font-size="3.3" fill="#666" text-anchor="end" font-family="Liberation Sans">Movements &amp; Politics</text>
<rect x="1275.4" y="394.38" width="63.60" height="3.6" fill="#3b2e5c"/>
<rect x="1322.8" y="394.38" width="16.20" height="3.6" fill="#1d6b35" opacity="0.7"/>
<rect x="1339" y="395.58" width="18.90" height="1.2" fill="#5cb85c" opacity="0.85"/>
<text x="1273.3" y="397.38" font-size="3.3" fill="#666" text-anchor="end" font-family="Liberation Sans">New Age &amp; Spirituality</text>
<rect x="1275.4" y="399.21" width="60.20" height="3.6" fill="#3e346b"/>
<rect x="1321.6" y="399.21" width="14.00" height="3.6" fill="#1d6b35" opacity="0.7"/>
<rect x="1335.6" y="400.41" width="13.90" height="1.2" fill="#5cb85c" opacity="0.85"/>
<text x="1273.3" y="402.21" font-size="3.3" fill="#666" text-anchor="end" font-family="Liberation Sans">Sports &amp; Recreation</text>
<rect x="1275.4" y="404.04" width="57.40" height="3.6" fill="#403b79"/>
<rect x="1312.7" y="404.04" width="20.10" height="3.6" fill="#1d6b35" opacity="0.7"/>
<rect x="1332.8" y="405.24" width="23.20" height="1.2" fill="#5cb85c" opacity="0.85"/>
<text x="1273.3" y="407.04" font-size="3.3" fill="#666" text-anchor="end" font-family="Liberation Sans">Music</text>
<rect x="1275.4" y="408.87" width="56.80" height="3.6" fill="#404386"/>
<rect x="1300.5" y="408.87" width="31.70" height="3.6" fill="#1d6b35" opacity="0.7"/>
<rect x="1332.2" y="410.07" width="48.50" height="1.2" fill="#5cb85c" opacity="0.85"/>
<text x="1273.3" y="411.87" font-size="3.3" fill="#666" text-anchor="end" font-family="Liberation Sans">Sci-Fi &amp; Fantasy</text>
<rect x="1275.4" y="413.70" width="52.90" height="3.6" fill="#3e4c91"/>
<rect x="1309.4" y="413.70" width="18.90" height="3.6" fill="#1d6b35" opacity="0.7"/>
<rect x="1328.3" y="414.90" width="23.70" height="1.2" fill="#5cb85c" opacity="0.85"/>
<text x="1273.3" y="416.70" font-size="3.3" fill="#666" text-anchor="end" font-family="Liberation Sans">Education &amp; Learning</text>
<rect x="1275.4" y="418.53" width="52.40" height="3.6" fill="#3b5598"/>
<rect x="1316" y="418.53" width="11.80" height="3.6" fill="#1d6b35" opacity="0.7"/>
<rect x="1327.8" y="419.73" width="15.00" height="1.2" fill="#5cb85c" opacity="0.85"/>
<text x="1273.3" y="421.53" font-size="3.3" fill="#666" text-anchor="end" font-family="Liberation Sans">Outdoors &amp; Adventure</text>
<rect x="1275.4" y="423.36" width="48.50" height="3.6" fill="#385f9c"/>
<rect x="1301.6" y="423.36" width="22.30" height="3.6" fill="#1d6b35" opacity="0.7"/>
<rect x="1323.9" y="424.56" width="22.10" height="1.2" fill="#5cb85c" opacity="0.85"/>
<text x="1273.3" y="426.36" font-size="3.3" fill="#666" text-anchor="end" font-family="Liberation Sans">Hobbies &amp; Crafts</text>
<rect x="1275.4" y="428.19" width="46.50" height="3.6" fill="#36689e"/>
<rect x="1313.8" y="428.19" width="8.10" height="3.6" fill="#1d6b35" opacity="0.7"/>
<rect x="1321.9" y="429.39" width="7.80" height="1.2" fill="#5cb85c" opacity="0.85"/>
<text x="1273.3" y="431.19" font-size="3.3" fill="#666" text-anchor="end" font-family="Liberation Sans">Career &amp; Business</text>
<rect x="1275.4" y="433.02" width="44.60" height="3.6" fill="#3571a0"/>
<rect x="1316" y="433.02" width="4.00" height="3.6" fill="#1d6b35" opacity="0.7"/>
<rect x="1320" y="434.22" width="4.40" height="1.2" fill="#5cb85c" opacity="0.85"/>
<text x="1273.3" y="436.02" font-size="3.3" fill="#666" text-anchor="end" font-family="Liberation Sans">Cars &amp; Motorcycles</text>
<rect x="1275.4" y="437.85" width="43.50" height="3.6" fill="#347aa2"/>
<rect x="1301.6" y="437.85" width="17.30" height="3.6" fill="#1d6b35" opacity="0.7"/>
<rect x="1318.9" y="439.05" width="18.60" height="1.2" fill="#5cb85c" opacity="0.85"/>
<text x="1273.3" y="440.85" font-size="3.3" fill="#666" text-anchor="end" font-family="Liberation Sans">Support</text>
<rect x="1275.4" y="442.68" width="42.60" height="3.6" fill="#3483a4"/>
<rect x="1300.7" y="442.68" width="17.30" height="3.6" fill="#1d6b35" opacity="0.7"/>
<rect x="1318" y="443.88" width="20.10" height="1.2" fill="#5cb85c" opacity="0.85"/>
<text x="1273.3" y="445.68" font-size="3.3" fill="#666" text-anchor="end" font-family="Liberation Sans">Movies &amp; Film</text>
<rect x="1275.4" y="447.51" width="42.30" height="3.6" fill="#338ca6"/>
<rect x="1307" y="447.51" width="10.70" height="3.6" fill="#1d6b35" opacity="0.7"/>
<rect x="1317.7" y="448.71" width="16.60" height="1.2" fill="#5cb85c" opacity="0.85"/>
<text x="1273.3" y="450.51" font-size="3.3" fill="#666" text-anchor="end" font-family="Liberation Sans">Health &amp; Wellbeing</text>
<rect x="1275.4" y="452.34" width="42.30" height="3.6" fill="#3495a8"/>
<rect x="1304.7" y="452.34" width="13.00" height="3.6" fill="#1d6b35" opacity="0.7"/>
<rect x="1317.7" y="453.54" width="15.30" height="1.2" fill="#5cb85c" opacity="0.85"/>
<text x="1273.3" y="455.34" font-size="3.3" fill="#666" text-anchor="end" font-family="Liberation Sans">Book Clubs</text>
<rect x="1275.4" y="457.17" width="41.40" height="3.6" fill="#359eaa"/>
<rect x="1308.7" y="457.17" width="8.10" height="3.6" fill="#1d6b35" opacity="0.7"/>
<rect x="1316.8" y="458.37" width="9.00" height="1.2" fill="#5cb85c" opacity="0.85"/>
<text x="1273.3" y="460.17" font-size="3.3" fill="#666" text-anchor="end" font-family="Liberation Sans">Language &amp; Ethnic Identity</text>
<rect x="1275.4" y="462.00" width="40.50" height="3.6" fill="#37a7ab"/>
<rect x="1304.1" y="462.00" width="11.80" height="3.6" fill="#1d6b35" opacity="0.7"/>
<rect x="1315.9" y="463.20" width="20.50" height="1.2" fill="#5cb85c" opacity="0.85"/>
<text x="1273.3" y="465.00" font-size="3.3" fill="#666" text-anchor="end" font-family="Liberation Sans">Writing</text>
<rect x="1275.4" y="466.83" width="38.50" height="3.6" fill="#3bb0ac"/>
<rect x="1302.4" y="466.83" width="11.50" height="3.6" fill="#1d6b35" opacity="0.7"/>
<rect x="1313.9" y="468.03" width="14.20" height="1.2" fill="#5cb85c" opacity="0.85"/>
<text x="1273.3" y="469.83" font-size="3.3" fill="#666" text-anchor="end" font-family="Liberation Sans">Pets &amp; Animals</text>
<rect x="1275.4" y="471.66" width="38.50" height="3.6" fill="#41b9ad"/>
<rect x="1303" y="471.66" width="10.90" height="3.6" fill="#1d6b35" opacity="0.7"/>
<rect x="1313.9" y="472.86" width="12.70" height="1.2" fill="#5cb85c" opacity="0.85"/>
<text x="1273.3" y="474.66" font-size="3.3" fill="#666" text-anchor="end" font-family="Liberation Sans">LGBT</text>
<rect x="1275.4" y="476.49" width="38.50" height="3.6" fill="#4ac2ad"/>
<rect x="1307" y="476.49" width="6.90" height="3.6" fill="#1d6b35" opacity="0.7"/>
<rect x="1313.9" y="477.69" width="9.30" height="1.2" fill="#5cb85c" opacity="0.85"/>
<text x="1273.3" y="479.49" font-size="3.3" fill="#666" text-anchor="end" font-family="Liberation Sans">Socializing</text>
<rect x="1275.4" y="481.32" width="37.70" height="3.6" fill="#57caac"/>
<rect x="1309.9" y="481.32" width="3.20" height="3.6" fill="#1d6b35" opacity="0.7"/>
<rect x="1313.1" y="482.52" width="4.90" height="1.2" fill="#5cb85c" opacity="0.85"/>
<text x="1273.3" y="484.32" font-size="3.3" fill="#666" text-anchor="end" font-family="Liberation Sans">Tech</text>
<rect x="1275.4" y="486.15" width="37.70" height="3.6" fill="#6ad1ac"/>
<rect x="1294" y="486.15" width="19.10" height="3.6" fill="#1d6b35" opacity="0.7"/>
<rect x="1313.1" y="487.35" width="32.30" height="1.2" fill="#5cb85c" opacity="0.85"/>
<text x="1273.3" y="489.15" font-size="3.3" fill="#666" text-anchor="end" font-family="Liberation Sans">Singles</text>
<rect x="1275.4" y="490.98" width="35.40" height="3.6" fill="#82d7b0"/>
<rect x="1304.1" y="490.98" width="6.70" height="3.6" fill="#1d6b35" opacity="0.7"/>
<rect x="1310.8" y="492.18" width="6.00" height="1.2" fill="#5cb85c" opacity="0.85"/>
<text x="1273.3" y="493.98" font-size="3.3" fill="#666" text-anchor="end" font-family="Liberation Sans">Fitness</text>
<rect x="1275.4" y="495.81" width="35.10" height="3.6" fill="#99ddb6"/>
<rect x="1304.1" y="495.81" width="6.40" height="3.6" fill="#1d6b35" opacity="0.7"/>
<rect x="1310.5" y="497.01" width="8.00" height="1.2" fill="#5cb85c" opacity="0.85"/>
<text x="1273.3" y="498.81" font-size="3.3" fill="#666" text-anchor="end" font-family="Liberation Sans">Food &amp; Drink</text>
<rect x="1275.4" y="500.64" width="34.70" height="3.6" fill="#ade2bf"/>
<rect x="1304.1" y="500.64" width="6.00" height="3.6" fill="#1d6b35" opacity="0.7"/>
<rect x="1310.1" y="501.84" width="5.30" height="1.2" fill="#5cb85c" opacity="0.85"/>
<text x="1273.3" y="503.64" font-size="3.3" fill="#666" text-anchor="end" font-family="Liberation Sans">Community &amp; Environment</text>
<rect x="1275.4" y="505.47" width="30.10" height="3.6" fill="#bfe8cb"/>
<rect x="1296" y="505.47" width="9.50" height="3.6" fill="#1d6b35" opacity="0.7"/>
<rect x="1305.5" y="506.67" width="17.10" height="1.2" fill="#5cb85c" opacity="0.85"/>
<text x="1273.3" y="508.47" font-size="3.3" fill="#666" text-anchor="end" font-family="Liberation Sans">Parents &amp; Family</text>
<rect x="1275.4" y="510.30" width="25.00" height="3.6" fill="#d0eed9"/>
<rect x="1294.3" y="510.30" width="6.10" height="3.6" fill="#1d6b35" opacity="0.7"/>
<rect x="1300.4" y="511.50" width="9.30" height="1.2" fill="#5cb85c" opacity="0.85"/>
<text x="1273.3" y="513.30" font-size="3.3" fill="#666" text-anchor="end" font-family="Liberation Sans">Photography</text>
<path d="M1275.4 364V514.6H1480.3V364H1275.4" fill="none" stroke="#888" stroke-width="0.5"/>
<path d="M1275.3 514.6v1.2" stroke="#555" stroke-width="0.4"/>
<text x="1275.3" y="519.2" font-size="3.9" fill="#444" text-anchor="middle" font-family="Liberation Sans">0</text>
<path d="M1311.9 514.6v1.2" stroke="#555" stroke-width="0.4"/>
<text x="1311.9" y="519.2" font-size="3.9" fill="#444" text-anchor="middle" font-family="Liberation Sans">2</text>
<path d="M1348.5 514.6v1.2" stroke="#555" stroke-width="0.4"/>
<text x="1348.5" y="519.2" font-size="3.9" fill="#444" text-anchor="middle" font-family="Liberation Sans">4</text>
<path d="M1385.2 514.6v1.2" stroke="#555" stroke-width="0.4"/>
<text x="1385.2" y="519.2" font-size="3.9" fill="#444" text-anchor="middle" font-family="Liberation Sans">6</text>
<path d="M1421.9 514.6v1.2" stroke="#555" stroke-width="0.4"/>
<text x="1421.9" y="519.2" font-size="3.9" fill="#444" text-anchor="middle" font-family="Liberation Sans">8</text>
<path d="M1458.3 514.6v1.2" stroke="#555" stroke-width="0.4"/>
<text x="1458.3" y="519.2" font-size="3.9" fill="#444" text-anchor="middle" font-family="Liberation Sans">10</text>
<text x="1378" y="523.3" font-size="3.9" fill="#444" text-anchor="middle" font-family="Liberation Sans">avg_event_attendance</text>
<text x="0" y="0" font-size="3.9" fill="#444" font-family="Liberation Sans" transform="translate(1236.5 452) rotate(-90)">group_name</text>
</svg></div>
<div class="a" style="left:1229.9px;top:528.8px;width:251.9px;height:189.2px;border:2px solid #1c6db0;background:#fff;overflow:hidden">
<div class="a fig" style="left:0.75px;top:0.1px;width:634px;height:476px;transform-origin:0 0;transform:scale(0.391)"><svg class="a" style="left:0;top:0" width="634" height="476"><defs><linearGradient id="cbgt" x1="0" y1="1" x2="0" y2="0">
<stop offset="0.000" stop-color="#02061a"/>
<stop offset="0.025" stop-color="#0a0a20"/>
<stop offset="0.050" stop-color="#130f26"/>
<stop offset="0.075" stop-color="#1d142d"/>
<stop offset="0.100" stop-color="#261834"/>
<stop offset="0.125" stop-color="#311c3b"/>
<stop offset="0.150" stop-color="#3b1f41"/>
<stop offset="0.175" stop-color="#442146"/>
<stop offset="0.200" stop-color="#50244c"/>
<stop offset="0.225" stop-color="#5a2650"/>
<stop offset="0.250" stop-color="#662854"/>
<stop offset="0.275" stop-color="#712a57"/>
<stop offset="0.300" stop-color="#7b2b59"/>
<stop offset="0.325" stop-color="#882b5b"/>
<stop offset="0.350" stop-color="#932c5c"/>
<stop offset="0.375" stop-color="#a02b5c"/>
<stop offset="0.400" stop-color="#ac2b5c"/>
<stop offset="0.425" stop-color="#b72a5a"/>
<stop offset="0.450" stop-color="#c42a57"/>
<stop offset="0.475" stop-color="#ce2b54"/>
<stop offset="0.500" stop-color="#da2f4f"/>
<stop offset="0.525" stop-color="#e2354a"/>
<stop offset="0.550" stop-color="#ea3c45"/>
<stop offset="0.575" stop-color="#f14640"/>
<stop offset="0.600" stop-color="#f64f3c"/>
<stop offset="0.625" stop-color="#fa5b3b"/>
<stop offset="0.650" stop-color="#fc653d"/>
<stop offset="0.675" stop-color="#fe6f42"/>
<stop offset="0.700" stop-color="#fe7b4a"/>
<stop offset="0.725" stop-color="#ff8552"/>
<stop offset="0.750" stop-color="#ff905c"/>
<stop offset="0.775" stop-color="#fe9966"/>
<stop offset="0.800" stop-color="#fea270"/>
<stop offset="0.825" stop-color="#fdad7d"/>
<stop offset="0.850" stop-color="#fdb688"/>
<stop offset="0.875" stop-color="#fcc097"/>
<stop offset="0.900" stop-color="#fbc8a4"/>
<stop offset="0.925" stop-color="#fbd1b1"/>
<stop offset="0.950" stop-color="#fbdbc1"/>
<stop offset="0.975" stop-color="#fbe3cf"/>
<stop offset="1.000" stop-color="#fcebdc"/>
</linearGradient></defs>
<rect x="103.70" y="12.20" width="50.37" height="41.14" fill="#fcebdc"/>
<rect x="152.87" y="12.20" width="50.37" height="41.14" fill="#02061a"/>
<rect x="202.03" y="12.20" width="50.37" height="41.14" fill="#1c132c"/>
<rect x="251.20" y="12.20" width="50.37" height="41.14" fill="#391e40"/>
<rect x="300.37" y="12.20" width="50.37" height="41.14" fill="#9d2b5c"/>
<rect x="349.53" y="12.20" width="50.37" height="41.14" fill="#141027"/>
<rect x="398.70" y="12.20" width="50.37" height="41.14" fill="#a82b5c"/>
<rect x="447.87" y="12.20" width="50.37" height="41.14" fill="#bd2a59"/>
<rect x="497.03" y="12.20" width="49.17" height="41.14" fill="#1f152e"/>
<rect x="103.70" y="52.14" width="50.37" height="41.14" fill="#02061a"/>
<rect x="152.87" y="52.14" width="50.37" height="41.14" fill="#fcebdc"/>
<rect x="202.03" y="52.14" width="50.37" height="41.14" fill="#fe7646"/>
<rect x="251.20" y="52.14" width="50.37" height="41.14" fill="#de324d"/>
<rect x="300.37" y="52.14" width="50.37" height="41.14" fill="#2b1a37"/>
<rect x="349.53" y="52.14" width="50.37" height="41.14" fill="#f44a3e"/>
<rect x="398.70" y="52.14" width="50.37" height="41.14" fill="#331c3c"/>
<rect x="447.87" y="52.14" width="50.37" height="41.14" fill="#301b3a"/>
<rect x="497.03" y="52.14" width="49.17" height="41.14" fill="#f7513c"/>
<rect x="103.70" y="92.08" width="50.37" height="41.14" fill="#1c132c"/>
<rect x="152.87" y="92.08" width="50.37" height="41.14" fill="#fe7646"/>
<rect x="202.03" y="92.08" width="50.37" height="41.14" fill="#fcebdc"/>
<rect x="251.20" y="92.08" width="50.37" height="41.14" fill="#a82b5c"/>
<rect x="300.37" y="92.08" width="50.37" height="41.14" fill="#482248"/>
<rect x="349.53" y="92.08" width="50.37" height="41.14" fill="#f8543b"/>
<rect x="398.70" y="92.08" width="50.37" height="41.14" fill="#2e1b39"/>
<rect x="447.87" y="92.08" width="50.37" height="41.14" fill="#4b234a"/>
<rect x="497.03" y="92.08" width="49.17" height="41.14" fill="#c02958"/>
<rect x="103.70" y="132.02" width="50.37" height="41.14" fill="#391e40"/>
<rect x="152.87" y="132.02" width="50.37" height="41.14" fill="#de324d"/>
<rect x="202.03" y="132.02" width="50.37" height="41.14" fill="#a82b5c"/>
<rect x="251.20" y="132.02" width="50.37" height="41.14" fill="#fcebdc"/>
<rect x="300.37" y="132.02" width="50.37" height="41.14" fill="#bd2a59"/>
<rect x="349.53" y="132.02" width="50.37" height="41.14" fill="#a02b5c"/>
<rect x="398.70" y="132.02" width="50.37" height="41.14" fill="#8c2b5b"/>
<rect x="447.87" y="132.02" width="50.37" height="41.14" fill="#c02958"/>
<rect x="497.03" y="132.02" width="49.17" height="41.14" fill="#fbcdab"/>
<rect x="103.70" y="171.96" width="50.37" height="41.14" fill="#9d2b5c"/>
<rect x="152.87" y="171.96" width="50.37" height="41.14" fill="#2b1a37"/>
<rect x="202.03" y="171.96" width="50.37" height="41.14" fill="#482248"/>
<rect x="251.20" y="171.96" width="50.37" height="41.14" fill="#bd2a59"/>
<rect x="300.37" y="171.96" width="50.37" height="41.14" fill="#fcebdc"/>
<rect x="349.53" y="171.96" width="50.37" height="41.14" fill="#221631"/>
<rect x="398.70" y="171.96" width="50.37" height="41.14" fill="#bd2a59"/>
<rect x="447.87" y="171.96" width="50.37" height="41.14" fill="#c82a56"/>
<rect x="497.03" y="171.96" width="49.17" height="41.14" fill="#171129"/>
<rect x="103.70" y="211.89" width="50.37" height="41.14" fill="#141027"/>
<rect x="152.87" y="211.89" width="50.37" height="41.14" fill="#f44a3e"/>
<rect x="202.03" y="211.89" width="50.37" height="41.14" fill="#f8543b"/>
<rect x="251.20" y="211.89" width="50.37" height="41.14" fill="#a02b5c"/>
<rect x="300.37" y="211.89" width="50.37" height="41.14" fill="#221631"/>
<rect x="349.53" y="211.89" width="50.37" height="41.14" fill="#fcebdc"/>
<rect x="398.70" y="211.89" width="50.37" height="41.14" fill="#07081e"/>
<rect x="447.87" y="211.89" width="50.37" height="41.14" fill="#0a0a20"/>
<rect x="497.03" y="211.89" width="49.17" height="41.14" fill="#cd2a55"/>
<rect x="103.70" y="251.83" width="50.37" height="41.14" fill="#a82b5c"/>
<rect x="152.87" y="251.83" width="50.37" height="41.14" fill="#331c3c"/>
<rect x="202.03" y="251.83" width="50.37" height="41.14" fill="#2e1b39"/>
<rect x="251.20" y="251.83" width="50.37" height="41.14" fill="#8c2b5b"/>
<rect x="300.37" y="251.83" width="50.37" height="41.14" fill="#bd2a59"/>
<rect x="349.53" y="251.83" width="50.37" height="41.14" fill="#07081e"/>
<rect x="398.70" y="251.83" width="50.37" height="41.14" fill="#fcebdc"/>
<rect x="447.87" y="251.83" width="50.37" height="41.14" fill="#f7513c"/>
<rect x="497.03" y="251.83" width="49.17" height="41.14" fill="#682855"/>
<rect x="103.70" y="291.77" width="50.37" height="41.14" fill="#bd2a59"/>
<rect x="152.87" y="291.77" width="50.37" height="41.14" fill="#301b3a"/>
<rect x="202.03" y="291.77" width="50.37" height="41.14" fill="#4b234a"/>
<rect x="251.20" y="291.77" width="50.37" height="41.14" fill="#c02958"/>
<rect x="300.37" y="291.77" width="50.37" height="41.14" fill="#c82a56"/>
<rect x="349.53" y="291.77" width="50.37" height="41.14" fill="#0a0a20"/>
<rect x="398.70" y="291.77" width="50.37" height="41.14" fill="#f7513c"/>
<rect x="447.87" y="291.77" width="50.37" height="41.14" fill="#fcebdc"/>
<rect x="497.03" y="291.77" width="49.17" height="41.14" fill="#932c5c"/>
<rect x="103.70" y="331.71" width="50.37" height="39.94" fill="#1f152e"/>
<rect x="152.87" y="331.71" width="50.37" height="39.94" fill="#f7513c"/>
<rect x="202.03" y="331.71" width="50.37" height="39.94" fill="#c02958"/>
<rect x="251.20" y="331.71" width="50.37" height="39.94" fill="#fbcdab"/>
<rect x="300.37" y="331.71" width="50.37" height="39.94" fill="#171129"/>
<rect x="349.53" y="331.71" width="50.37" height="39.94" fill="#cd2a55"/>
<rect x="398.70" y="331.71" width="50.37" height="39.94" fill="#682855"/>
<rect x="447.87" y="331.71" width="50.37" height="39.94" fill="#932c5c"/>
<rect x="497.03" y="331.71" width="49.17" height="39.94" fill="#fcebdc"/>
<rect x="574.00" y="12.20" width="17.5" height="359.45" fill="url(#cbgt)"/>
<rect x="591.50" y="11.45" width="7" height="1.5" fill="#444"/>
<rect x="591.50" y="63.45" width="7" height="1.5" fill="#444"/>
<rect x="591.50" y="115.45" width="7" height="1.5" fill="#444"/>
<rect x="591.50" y="167.45" width="7" height="1.5" fill="#444"/>
<rect x="591.50" y="219.45" width="7" height="1.5" fill="#444"/>
<rect x="591.50" y="271.45" width="7" height="1.5" fill="#444"/>
<rect x="591.50" y="323.45" width="7" height="1.5" fill="#444"/>
</svg>
<div class="yl" style="top:24.2px">Clustering</div>
<div class="yl" style="top:64.1px">Degree</div>
<div class="yl" style="top:104.0px">num_members</div>
<div class="yl" style="top:144.0px">created</div>
<div class="yl" style="top:183.9px">time_last_event</div>
<div class="yl" style="top:223.9px">no_events</div>
<div class="yl" style="top:263.8px">avg_time_diff</div>
<div class="yl" style="top:303.7px">time_diff_std</div>
<div class="yl" style="top:343.7px">uptime</div>
<div class="xl" style="left:121.8px">Clustering</div>
<div class="xl" style="left:170.9px">Degree</div>
<div class="xl" style="left:220.1px">num_members</div>
<div class="xl" style="left:269.3px">created</div>
<div class="xl" style="left:318.5px">time_last_event</div>
<div class="xl" style="left:367.6px">no_events</div>
<div class="xl" style="left:416.8px">avg_time_diff</div>
<div class="xl" style="left:466.0px">time_diff_std</div>
<div class="xl" style="left:515.1px">uptime</div>
<div class="tl" style="top:5.2px">1.0</div>
<div class="tl" style="top:57.2px">0.8</div>
<div class="tl" style="top:109.2px">0.6</div>
<div class="tl" style="top:161.2px">0.4</div>
<div class="tl" style="top:213.2px">0.2</div>
<div class="tl" style="top:265.2px">0.0</div>
<div class="tl" style="top:317.2px">−0.2</div></div>
</div>
<div class="a" style="left:1230px;top:721.6px;width:251.9px;height:33px;background:#fff;overflow:hidden">
<svg class="a" style="left:0;top:0" width="252" height="33" viewBox="1230 721.6 251.9 33">
<rect x="1245.3" y="723.7" width="69.4" height="40" fill="none" stroke="#e6e6e6" stroke-width="0.5"/>
<path d="M1245.3 726.8H1314.7" stroke="#e2e2e2" stroke-width="0.5"/>
<path d="M1245.3 737.5H1314.7" stroke="#e2e2e2" stroke-width="0.5"/>
<path d="M1245.3 747.9H1314.7" stroke="#e2e2e2" stroke-width="0.5"/>
<rect x="1328.5" y="723.7" width="69.0" height="40" fill="none" stroke="#e6e6e6" stroke-width="0.5"/>
<path d="M1328.5 729.4H1397.5" stroke="#e2e2e2" stroke-width="0.5"/>
<path d="M1328.5 739.8H1397.5" stroke="#e2e2e2" stroke-width="0.5"/>
<path d="M1328.5 750H1397.5" stroke="#e2e2e2" stroke-width="0.5"/>
<rect x="1411.4" y="723.7" width="68.8" height="40" fill="none" stroke="#e6e6e6" stroke-width="0.5"/>
<path d="M1411.4 731.8H1480.2" stroke="#e2e2e2" stroke-width="0.5"/>
<path d="M1411.4 740.5H1480.2" stroke="#e2e2e2" stroke-width="0.5"/>
<path d="M1411.4 748.8H1480.2" stroke="#e2e2e2" stroke-width="0.5"/>
<rect x="1249.7" y="750.5" width="27.2" height="10" fill="#5877a6"/>
<rect x="1284.8" y="729.7" width="26.4" height="30" fill="#d68f5c"/>
<rect x="1332" y="731.8" width="27.4" height="30" fill="#5877a6"/>
<rect x="1366.6" y="742.2" width="27.4" height="20" fill="#d68f5c"/>
<rect x="1449" y="734.9" width="27.7" height="30" fill="#d68f5c"/>
<path d="M1263.5 746.2V754" stroke="#444" stroke-width="0.7"/>
<path d="M1297.8 726.3V733.2" stroke="#444" stroke-width="0.7"/>
<path d="M1345.8 726.3V737.7" stroke="#444" stroke-width="0.7"/>
<path d="M1380.2 739.3V744.1" stroke="#444" stroke-width="0.7"/>
<path d="M1462.8 726.3V742.4" stroke="#444" stroke-width="0.7"/>
<text x="1241" y="728.0" font-size="3.4" fill="#555" text-anchor="end" font-family="Liberation Sans">0.6</text>
<text x="1241" y="738.7" font-size="3.4" fill="#555" text-anchor="end" font-family="Liberation Sans">0.5</text>
<text x="1241" y="749.1" font-size="3.4" fill="#555" text-anchor="end" font-family="Liberation Sans">0.4</text>
<text x="1325" y="730.6" font-size="3.4" fill="#555" text-anchor="end" font-family="Liberation Sans">600</text>
<text x="1325" y="741.0" font-size="3.4" fill="#555" text-anchor="end" font-family="Liberation Sans">500</text>
<text x="1325" y="751.2" font-size="3.4" fill="#555" text-anchor="end" font-family="Liberation Sans">400</text>
<text x="1407" y="733.0" font-size="3.4" fill="#555" text-anchor="end" font-family="Liberation Sans">35</text>
<text x="1407" y="741.7" font-size="3.4" fill="#555" text-anchor="end" font-family="Liberation Sans">30</text>
<text x="1407" y="750.0" font-size="3.4" fill="#555" text-anchor="end" font-family="Liberation Sans">25</text>
</svg></div>
<svg class="a" style="left:1484px;top:268px" width="14" height="490" viewBox="1484 268 14 490">
<path d="M1487 277.6L1490.7 273.3L1494.4 277.6Z" fill="#455364"/>
<rect x="1486.3" y="281.2" width="8.8" height="462" rx="4.4" fill="none" stroke="#37414f" stroke-width="0.9"/>
<rect x="1486.8" y="497.7" width="7.9" height="169.3" rx="3.9" fill="#60798b"/>
<path d="M1487 746.9L1490.7 750.6L1494.4 746.9Z" fill="#455364"/>
</svg>
<div class="a" style="left:1221.7px;top:509.7px;width:1.6px;height:5.5px;background:#7d8b98;border-radius:1px"></div>
<div id="bottombar" class="a"></div>
<div class="a" style="left:0;top:757.9px;width:1500px;height:1.4px;background:#95a1ac"></div>
<div class="a" style="left:608.5px;top:757.9px;width:284.5px;height:5.1px;background:#263545"></div>
<div class="a" style="left:608.5px;top:760px;width:77.4px;height:3px;background:#455364"></div>
<div class="a" style="left:687.3px;top:760px;width:26.8px;height:3px;background:#455364"></div>
<div class="a" style="left:715.5px;top:760px;width:25.8px;height:3px;background:#455364"></div>
<div class="a" style="left:742.7px;top:760px;width:83.5px;height:3px;background:#455364"></div>
<div class="a" style="left:826.5px;top:758px;width:29.2px;height:2.4px;background:#259ae9;border-radius:1px 1px 0 0"></div>
<div class="a" style="left:826.5px;top:760.4px;width:29.2px;height:2.6px;background:#3d6a94"></div>
<div class="a" style="left:856.5px;top:760px;width:36.5px;height:3px;background:#4a5870"></div>
<svg class="a" style="left:633px;top:403px" width="12" height="18" viewBox="-1.4 -1 12 18"><path d="M0 0V13.6L3.2 10.5L5.6 15.4L7.6 14.5L5.2 9.7H9.4Z" fill="#fff" stroke="#111" stroke-width="0.9" stroke-linejoin="round"/></svg>
<svg class="a" style="left:1307px;top:618.4px" width="12" height="17" viewBox="-1.4 -1 12 17"><path d="M0 0V12.6L3 9.7L5.2 14.2L7 13.4L4.8 9H8.7Z" fill="#fff" stroke="#111" stroke-width="0.9" stroke-linejoin="round"/></svg>
</body></html>
